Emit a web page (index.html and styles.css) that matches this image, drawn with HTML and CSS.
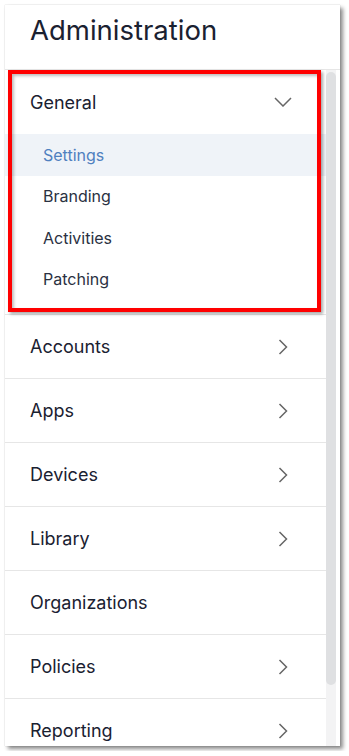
FILE: index.html
```html
<!DOCTYPE html>
<html lang="en">
<head>
    <meta charset="UTF-8">
    <meta name="viewport" content="width=device-width, initial-scale=1.0">
    <title>Administration</title>
    <link rel="stylesheet" href="styles.css">
</head>
<body>
    <div class="panel">
        <div class="panel-header">
            <h1>Administration</h1>
        </div>

        <div class="panel-body">
            <ul class="menu">
                <!-- General is expanded -->
                <li class="menu-section">
                    <div class="menu-row">
                        <span>General</span>
                        <span class="icon">
                            <svg width="18" height="10" viewBox="0 0 18 10"><path d="M1 1 L9 9 L17 1" fill="none" stroke="#666" stroke-width="1.5"/></svg>
                        </span>
                    </div>
                    <ul class="submenu">
                        <li class="active">Settings</li>
                        <li>Branding</li>
                        <li>Activities</li>
                        <li>Patching</li>
                    </ul>
                </li>
                <li class="menu-row">
                    <span>Accounts</span>
                    <span class="icon"><svg width="10" height="16" viewBox="0 0 10 16"><path d="M1.5 1 L8.5 8 L1.5 15" fill="none" stroke="#666" stroke-width="1.5"/></svg></span>
                </li>
                <li class="menu-row">
                    <span>Apps</span>
                    <span class="icon"><svg width="10" height="16" viewBox="0 0 10 16"><path d="M1.5 1 L8.5 8 L1.5 15" fill="none" stroke="#666" stroke-width="1.5"/></svg></span>
                </li>
                <li class="menu-row">
                    <span>Devices</span>
                    <span class="icon"><svg width="10" height="16" viewBox="0 0 10 16"><path d="M1.5 1 L8.5 8 L1.5 15" fill="none" stroke="#666" stroke-width="1.5"/></svg></span>
                </li>
                <li class="menu-row">
                    <span>Library</span>
                    <span class="icon"><svg width="10" height="16" viewBox="0 0 10 16"><path d="M1.5 1 L8.5 8 L1.5 15" fill="none" stroke="#666" stroke-width="1.5"/></svg></span>
                </li>
                <li class="menu-row">
                    <span>Organizations</span>
                </li>
                <li class="menu-row">
                    <span>Policies</span>
                    <span class="icon"><svg width="10" height="16" viewBox="0 0 10 16"><path d="M1.5 1 L8.5 8 L1.5 15" fill="none" stroke="#666" stroke-width="1.5"/></svg></span>
                </li>
                <li class="menu-row">
                    <span>Reporting</span>
                    <span class="icon"><svg width="10" height="16" viewBox="0 0 10 16"><path d="M1.5 1 L8.5 8 L1.5 15" fill="none" stroke="#666" stroke-width="1.5"/></svg></span>
                </li>
            </ul>

            <div class="scroll-track">
                <div class="scroll-thumb"></div>
            </div>
        </div>

        <!-- highlight annotation -->
        <div class="highlight"></div>
    </div>
</body>
</html>
```

FILE: styles.css
```css
body {
    margin: 0;
    padding: 0;
    background-color: #fff;
    font-family: Inter, "Noto Sans", sans-serif;
    color: #1a2131;
}

.panel {
    position: relative;
    margin: 5px;
    width: 335px;
    height: 741px;
    background-color: #fff;
    display: flex;
    flex-direction: column;
    box-shadow: 0 0 1px rgba(0, 0, 0, 0.25), 3px 3px 4px rgba(0, 0, 0, 0.45);
}

.panel-header {
    height: 64px;
    padding-left: 25px;
    display: flex;
    align-items: center;
    border-bottom: 1px solid #e6e6e6;
}

h1 {
    margin: 0;
    font-size: 27.5px;
    font-weight: 400;
    margin-top: -15px;
}

.panel-body {
    flex: 1;
    display: flex;
    min-height: 0;
}

.menu {
    flex: 1;
    list-style: none;
    margin: 0;
    padding: 0;
    overflow: hidden;
}

.menu-section {
    padding-bottom: 14px;
    border-bottom: 1px solid #e6e6e6;
}

.menu-row {
    height: 63px;
    padding: 0 31px 0 25px;
    display: flex;
    align-items: center;
    justify-content: space-between;
    font-size: 18px;
    border-bottom: 1px solid #e6e6e6;
}

.menu-section .menu-row {
    height: 64px;
    border-bottom: none;
}

.icon {
    width: 24px;
    display: flex;
    justify-content: center;
}

.submenu {
    list-style: none;
    margin: 0;
    padding: 0;
}

.submenu li {
    height: 41.5px;
    padding-left: 38px;
    display: flex;
    align-items: center;
    font-size: 16px;
    color: #2a3142;
}

.submenu li.active {
    background-color: #eff3f8;
    color: #4f80bf;
}

.scroll-track {
    width: 10px;
    margin-right: 4px;
    padding-top: 2px;
    background-color: #f3f3f4;
}

.scroll-thumb {
    height: 613px;
    border-radius: 5px;
    background-color: #dfe0e2;
}

.highlight {
    position: absolute;
    left: 3px;
    top: 65px;
    width: 305px;
    height: 234px;
    border: 4px solid #ff0000;
    box-shadow: 2px 2px 3px rgba(0, 0, 0, 0.35), inset 2px 2px 3px rgba(0, 0, 0, 0.25);
}
```
